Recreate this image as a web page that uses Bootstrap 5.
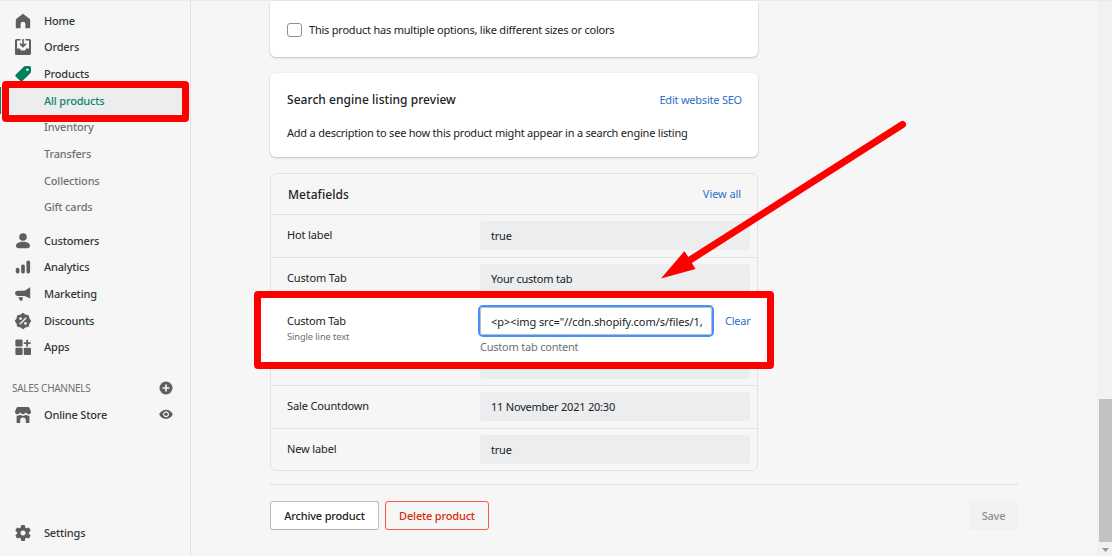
<!DOCTYPE html>
<html lang="en">
<head>
<meta charset="utf-8">
<meta name="viewport" content="width=device-width, initial-scale=1">
<title>Products</title>
<link href="https://cdn.jsdelivr.net/npm/bootstrap@5.3.0/dist/css/bootstrap.min.css" rel="stylesheet">
<style>
body{font-family:"Noto Sans","Open Sans",sans-serif;font-size:11px;line-height:16px;letter-spacing:-.22px;color:#202223;background:#f6f6f6;height:556px;overflow:hidden}
a{color:#2c6ecb;text-decoration:none}
.shell{height:556px;border-top:1px solid #ebebeb}
.side{width:191px;border-right:1px solid #dfe0e1;padding-top:6.4px;font-weight:500;letter-spacing:-.18px}
.side .item{height:26.67px;display:flex;align-items:center;padding-left:15px;color:#333639;flex:none}
.side .item .ic{width:16px;height:16px;margin-right:13px;flex:none}
.side .item.sub{padding-left:44px;color:#6d7175}
.side svg{fill:#5c5f62}
.side .item.active-sub{color:#108564;background:#ebedef;box-shadow:inset 1px 0 #00805f}
.side .group-start{margin-top:6.6px}
.side .last-item{margin-bottom:10px}
.channels{height:27px;padding:0 17px 0 12px;color:#6d7175;font-size:10px;font-weight:400;letter-spacing:-.28px;margin-top:14px;flex:none}
.tool-ic{width:14px;height:14px;margin-left:auto}
.content-col{width:488px;margin-left:79px}
.panel{background:#fff;border-radius:6px;box-shadow:0 1px 2px rgba(0,0,0,.2),0 0 3px rgba(23,24,24,.06)}
.p-one{height:56px;border-radius:0 0 6px 6px;padding:21px 17px 0}
.p-two{height:84px;margin-top:16px;padding:18px 16px 0 17px}
.p-two a{padding-top:1px}
.desc{margin-top:16px}
.tick{width:15px;height:14px;border:1px solid #8c9196;border-radius:3px;background:#fff;margin:1px 7px 0 0}
.title{font-size:12px;font-weight:500;line-height:18px;letter-spacing:.05px}
.meta{margin-top:16px;border:1px solid #e1e3e5;border-radius:6px;height:298px}
.meta-head{height:40px;padding:1px 16px 0 17px}
.meta-head a{letter-spacing:-.08px;margin-top:-2px}
.meta-row{height:43px;border-top:1px solid #e1e3e5;padding:6px 7px 0 16px}
.meta-row.short{height:42px}
.meta-row .lab{width:193px;padding-top:6px;flex:none;letter-spacing:-.14px}
.value{height:29px;flex:1;background:#ebedef;border-radius:3px;padding:7px 11px}
.foot{width:748px;margin:13px 0 0 79px;border-top:1px solid #dfe0e2;padding-top:16px}
.foot .btn{font-size:11px;line-height:16px;height:29px;padding:5px 0;border-radius:3px;font-weight:500;letter-spacing:-.18px}
.foot .b-arch{width:109px;background:#fff;border:1px solid #babfc3;border-bottom-color:#aeb4b9;color:#202223}
.foot .b-del{width:104px;margin-left:6px;border:1px solid #fd5749;color:#d72c0d}
.foot .b-save{width:49px;background:#f1f1f1;color:#8c9196;border:0}
.scroller{width:15px;background:#f1f1f1;padding:398px 0 0 2px}
.thumb{height:143px;background:#c1c1c1}
.red{position:absolute;border:7px solid #f00;border-radius:4px}
.red-nav{left:2px;top:81px;width:187px;height:41px}
.red-field{left:254px;top:291px;width:520px;height:78px;background:#fff;padding:7px 0 0 26px}
.red-field .lab{width:193px;padding-top:8px;flex:none}
.hint{font-size:9.3px;color:#6d7175;letter-spacing:-.1px}
.help{color:#6d7175;margin-top:2px}
.clear{margin:8px 0 0 11px}
.edit{width:236px;height:32px;margin-left:-2px;border:2px solid #458fff;border-radius:5px;background:#fff}
.edit div{height:28px;border:1px solid #babfc3;border-radius:3px;padding:6px 0 0 10px;white-space:nowrap;letter-spacing:-.06px}
.arrow{position:absolute;left:0;top:0;pointer-events:none}
</style>
</head>
<body class="position-relative">
<div class="shell d-flex">
  <nav class="side d-flex flex-column flex-shrink-0">
    <div class="item"><svg class="ic" viewBox="0 0 20 20"><path d="M10 .8 1.800 7.200Q1 8 1 9v9q0 1 1 1h5v-5a3 3 0 0 1 6 0v5h5q1 0 1-1V9q0-1-.8-1.800z"/></svg>Home</div>
    <div class="item"><svg class="ic" viewBox="0 0 20 20"><path fill-rule="evenodd" d="M2 0h5v2H2.500v10H6l1.500 2.500h5L14 12h3.500V2H13V0h5q2 0 2 2v16q0 2-2 2H2q-2 0-2-2V2q0-2 2-2zM9 0h2v7l2-2 1.500 1.500L10 11 5.500 6.500 7 5l2 2z"/></svg>Orders</div>
    <div class="item"><svg class="ic" viewBox="0 0 20 20" style="fill:#008060"><path fill-rule="evenodd" d="M11 .8Q12 0 13 0h5q2 0 2 2v5q0 1-.8 2L9 19.200q-1 .8-2 0L.8 13q-.8-1 0-2zM15.500 3a1.600 1.600 0 1 0 .1 0z"/></svg>Products</div>
    <div class="item sub active-sub">All products</div>
    <div class="item sub">Inventory</div>
    <div class="item sub">Transfers</div>
    <div class="item sub">Collections</div>
    <div class="item sub">Gift cards</div>
    <div class="item group-start"><svg class="ic" viewBox="0 0 20 20"><circle cx="10" cy="5" r="4.700"/><path d="M1.200 16c0-3 4-5 8.800-5s8.800 2 8.800 5q0 3-3 3H4q-2.800 0-2.800-3z"/></svg>Customers</div>
    <div class="item"><svg class="ic" viewBox="0 0 20 20"><rect x="1" y="11" width="4.600" height="7" rx="2"/><rect x="7.700" y="7" width="4.600" height="11" rx="2"/><rect x="14.300" y="2" width="4.600" height="16" rx="2"/></svg>Analytics</div>
    <div class="item"><svg class="ic" viewBox="0 0 20 20"><path d="M19 1.500v14l-7-3H3q-3-1-3-3.500t3-3h9zM4 14h6l-1 4.500H6.500z"/></svg>Marketing</div>
    <div class="item"><svg class="ic" viewBox="0 0 20 20"><path d="m10 .5 2.600 2 3.900.9 1 3.900 2 2.700-2 2.700-1 3.900-3.900.9-2.600 2-2.600-2-3.900-.9-1-3.900-2-2.700 2-2.700 1-3.900 3.900-.9z" stroke="#5c5f62" stroke-width="1.500" stroke-linejoin="round"/><path d="m6 14 8-8" stroke="#f5f5f5" stroke-width="1.700"/><circle cx="7" cy="7" r="1.700" fill="#f5f5f5"/><circle cx="13" cy="13" r="1.700" fill="#f5f5f5"/></svg>Discounts</div>
    <div class="item"><svg class="ic" viewBox="0 0 20 20"><rect width="9" height="9" x=".5" y=".5" rx="1.300"/><rect width="9" height="9" x=".5" y="11" rx="1.300"/><rect width="9" height="9" x="11" y="11" rx="1.300"/><path d="M14 1h2.400v3H19.500v2.400h-3.100v3H14v-3h-3V4h3z"/></svg>Apps</div>
    <div class="channels d-flex align-items-center">SALES CHANNELS<svg class="tool-ic" viewBox="0 0 20 20"><circle cx="10" cy="10" r="9.300"/><path d="M10 5v10M5 10h10" stroke="#f5f5f5" stroke-width="2.400"/></svg></div>
    <div class="item pe-3"><svg class="ic" viewBox="0 0 20 20"><path d="M3.500 0h13q1 0 1.400 1L20 5.500Q20 9 17 9q-2 0-3.500-2Q12 9 10 9T6.500 7Q5 9 3 9 0 9 0 5.500L2 1q.5-1 1.500-1zM2 11q3 0 4.500-1.300Q8 11 10 11t3.500-1.300Q15 11 18 11v9h-4.500v-3.500a3.500 3.500 0 0 0-7 0V20H2z"/></svg>Online Store<svg class="tool-ic" style="margin-right:1px" viewBox="0 0 20 20"><path fill-rule="evenodd" d="M10 2.500c6 0 9.500 5 9.500 6.500s-3.500 6.500-9.500 6.500S.5 10.500.5 9 4 2.500 10 2.500zm0 2.200a4.300 4.300 0 1 0 .1 0z"/><circle cx="10" cy="9" r="2.500"/></svg></div>
    <div class="item mt-auto last-item"><svg class="ic" viewBox="0 0 20 20"><path fill-rule="evenodd" d="M7.800 0h4.400l.6 3 1.700 1 3-1 2.100 3.800L17.400 9v2l2.200 2.200-2.100 3.800-3-1-1.700 1-.6 3H7.800l-.6-3-1.700-1-3 1L.4 13.200 2.600 11V9L.4 6.800 2.500 3l3 1 1.700-1zM10 6.800a3.200 3.200 0 1 0 .1 0z"/></svg>Settings</div>
  </nav>
  <main class="flex-grow-1">
    <div class="content-col">
      <section class="panel p-one d-flex align-items-start"><span class="tick"></span><span>This product has multiple options, like different sizes or colors</span></section>
      <section class="panel p-two">
        <div class="d-flex justify-content-between"><span class="title">Search engine listing preview</span><a href="#">Edit website SEO</a></div>
        <div class="desc">Add a description to see how this product might appear in a search engine listing</div>
      </section>
      <section class="meta">
        <div class="meta-head d-flex justify-content-between align-items-center"><span class="title">Metafields</span><a href="#">View all</a></div>
        <div class="meta-row d-flex"><span class="lab">Hot label</span><div class="value">true</div></div>
        <div class="meta-row d-flex"><span class="lab">Custom Tab</span><div class="value">Your custom tab</div></div>
        <div class="meta-row d-flex"><span class="lab"></span><div class="value"></div></div>
        <div class="meta-row short d-flex"><span class="lab"></span><div class="value"></div></div>
        <div class="meta-row d-flex"><span class="lab">Sale Countdown</span><div class="value">11 November 2021 20:30</div></div>
        <div class="meta-row d-flex"><span class="lab">New label</span><div class="value">true</div></div>
      </section>
    </div>
    <div class="foot d-flex"><button class="btn b-arch">Archive product</button><button class="btn b-del">Delete product</button><button class="btn b-save ms-auto">Save</button></div>
  </main>
  <div class="scroller"><div class="thumb"></div><svg class="d-block" width="13" height="14"><path d="M3 6h7L6.500 10z" fill="#999"/></svg></div>
</div>
<div class="red red-nav"></div>
<div class="red red-field d-flex">
  <div class="lab">Custom Tab<div class="hint">Single line text</div></div>
  <div><div class="edit"><div>&lt;p&gt;&lt;img src="//cdn.shopify.com/s/files/1,</div></div><div class="help">Custom tab content</div></div>
  <a href="#" class="clear">Clear</a>
</div>
<svg class="arrow" width="1112" height="556"><path d="M902.500 124.500 690 260" stroke="#f00" stroke-width="7" stroke-linecap="round"/><path d="M661 278.500 684.500 251l11 18z" fill="#f00"/></svg>
<script src="https://cdn.jsdelivr.net/npm/bootstrap@5.3.0/dist/js/bootstrap.bundle.min.js"></script>
</body>
</html>
